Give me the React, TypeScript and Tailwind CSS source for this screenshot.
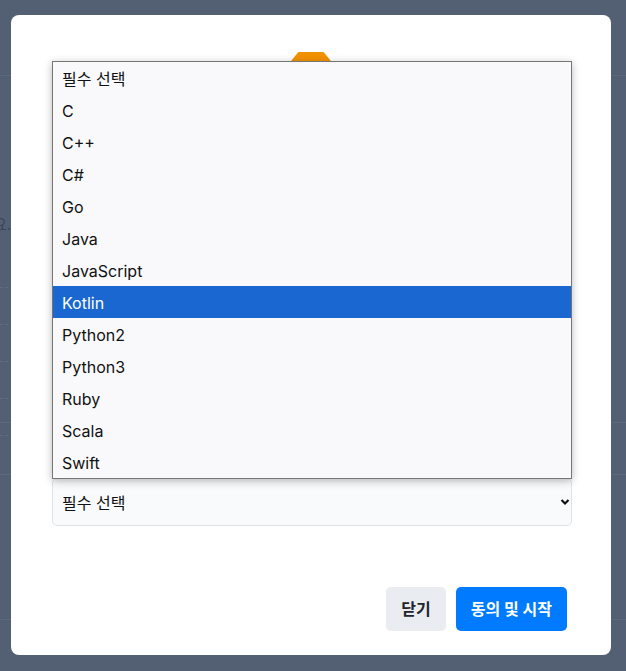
import React from "react";

const languages = [
  "필수 선택",
  "C",
  "C++",
  "C#",
  "Go",
  "Java",
  "JavaScript",
  "Kotlin",
  "Python2",
  "Python3",
  "Ruby",
  "Scala",
  "Swift",
];

export default function App() {
  return (
    <div className="relative h-[671px] w-full overflow-hidden bg-[#535f73] font-['Inter','Noto_Sans_CJK_KR',sans-serif]">
      {/* page behind the overlay */}
      <div className="h-[76px] border-b border-[#5d687a]" />
      <div className="mt-[138px] flex w-[11px] justify-end overflow-hidden">
        <span className="whitespace-nowrap text-[15px] text-[#3b4658]">입력해 주세요.</span>
      </div>
      <div className="mt-[14px]">
        {Array.from({ length: 5 }).map((_, i) => (
          <div key={i} className="h-[37px] w-[30px] border-b border-dashed border-[#616c7d]" />
        ))}
      </div>
      <div className="mt-[-14px] h-[1px] w-full bg-[#5d687a]" />
      <div className="mt-[51px] h-[1px] w-full bg-[#5d687a]" />
      <div className="mt-[144px] h-[1px] w-full bg-[#5d687a]" />

      {/* modal */}
      <div className="absolute left-[11px] top-[15px] flex h-[640px] w-[600px] flex-col rounded-[8px] bg-white">
        <div className="flex justify-center pt-[37px]">
          <Logo />
        </div>

        <div className="ml-[41px] mt-[382px] w-[520px]">
          <div className="flex h-[48px] items-center justify-between rounded-[5px] border border-[#dee2e6] bg-[#f9fafb] pl-[9px] pr-[1px]">
            <span className="pt-[1px] text-[16px] text-[#111]">필수 선택</span>
            <svg width="10" height="8" viewBox="0 0 10 8" aria-hidden="true">
              <path d="M1.5 2 L5 5.5 L8.5 2" fill="none" stroke="#111" strokeWidth="2.2" />
            </svg>
          </div>
        </div>

        <div className="mt-[61px] flex justify-end gap-[10px] pr-[44px]">
          <button className="h-[44px] rounded-[5px] bg-[#e9ecf1] px-[15px] text-[16px] font-bold text-[#212529]">
            닫기
          </button>
          <button className="h-[44px] rounded-[5px] bg-[#007bff] px-[15px] text-[16px] font-bold text-white">
            동의 및 시작
          </button>
        </div>

        {/* open select list */}
        <div className="absolute left-[41px] top-[46px] w-[520px] border border-[#767676] bg-[#f9f9fb] shadow-[0_2px_8px_rgba(0,0,0,0.28)]">
          {languages.map((lang) => (
            <div
              key={lang}
              className={
                lang === "Kotlin"
                  ? "flex h-[32px] items-center bg-[#1a67d2] pl-[9px] pt-[2px] text-[16px] text-white"
                  : "flex h-[32px] items-center pl-[9px] pt-[2px] text-[16px] text-[#111]"
              }
            >
              {lang}
            </div>
          ))}
        </div>
      </div>
    </div>
  );
}

function Logo() {
  return (
    <svg width="44" height="44" viewBox="0 0 44 44" aria-hidden="true">
      <polygon
        points="10,1 34,1 43,12 43,32 34,43 10,43 1,32 1,12"
        fill="#f39200"
        stroke="#f39200"
        strokeWidth="2"
        strokeLinejoin="round"
      />
    </svg>
  );
}
